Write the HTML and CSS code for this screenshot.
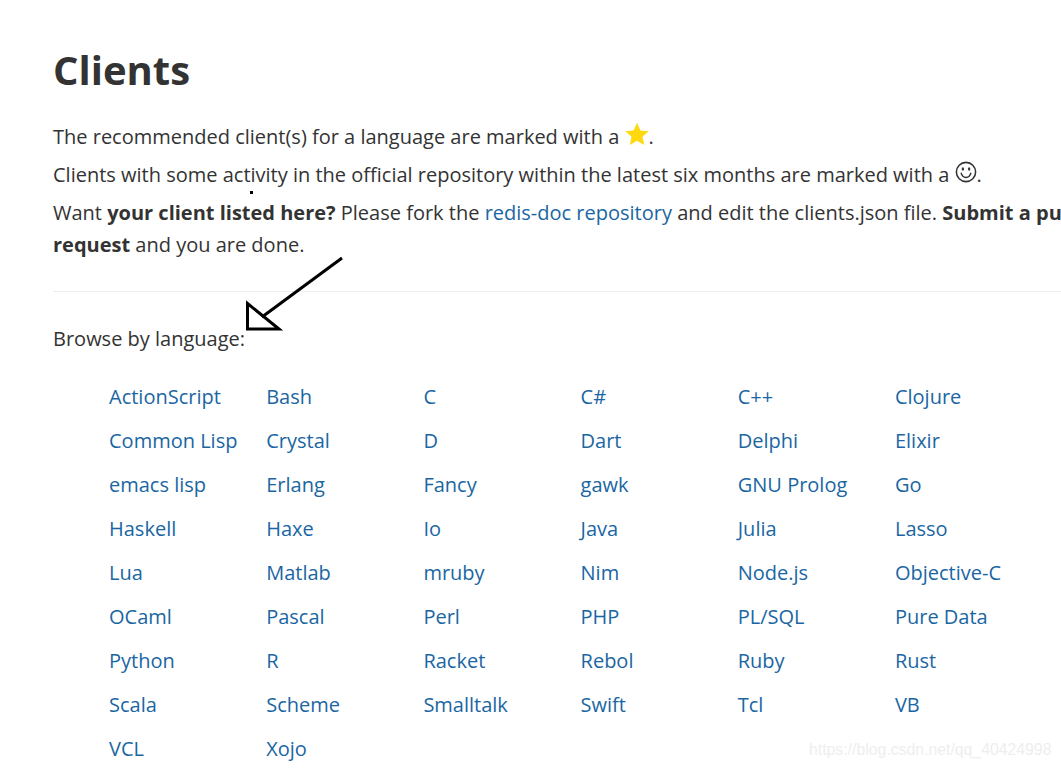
FILE: index.html
```html
<!DOCTYPE html>
<html lang="en">
<head>
<meta charset="utf-8">
<title>Clients</title>
<link rel="stylesheet" href="styles.css">
</head>
<body>
<main class="page">
  <h1 class="title">Clients</h1>
  <p class="line">The recommended client(s) for a language are marked with a <svg class="star" viewBox="0 0 24 24" width="24" height="24"><path d="M12 .8l3.4 7.6 8.2.9-6.1 5.5 1.700 8.100L12 18.800l-7.200 4.100 1.700-8.100L.4 9.300l8.200-.9z" fill="#ffd90f"/></svg>.</p>
  <p class="line">Clients with some activity in the official repository within the latest six months are marked with a <svg class="smile" viewBox="0 0 24 24" width="22" height="22"><g fill="none" stroke="#333" stroke-width="1.700"><circle cx="12" cy="12" r="10.500"/><path d="M6.800 13.500c1 3 3 4.400 5.200 4.400s4.200-1.400 5.200-4.400" stroke-linecap="round"/></g><ellipse cx="8.600" cy="8.800" rx="1.300" ry="1.900" fill="#333"/><ellipse cx="15.400" cy="8.800" rx="1.300" ry="1.900" fill="#333"/></svg>.</p>
  <p class="para">Want <strong>your client listed here?</strong> Please fork the <a href="#">redis-doc repository</a> and edit the clients.json file. <strong>Submit a pull request</strong> and you are done.</p>
  <hr class="rule">
  <p class="browse">Browse by language:</p>
  <ul class="langs">
    <li><a href="#">ActionScript</a></li><li><a href="#">Bash</a></li><li><a href="#">C</a></li><li><a href="#">C#</a></li><li><a href="#">C++</a></li><li><a href="#">Clojure</a></li>
    <li><a href="#">Common Lisp</a></li><li><a href="#">Crystal</a></li><li><a href="#">D</a></li><li><a href="#">Dart</a></li><li><a href="#">Delphi</a></li><li><a href="#">Elixir</a></li>
    <li><a href="#">emacs lisp</a></li><li><a href="#">Erlang</a></li><li><a href="#">Fancy</a></li><li><a href="#">gawk</a></li><li><a href="#">GNU Prolog</a></li><li><a href="#">Go</a></li>
    <li><a href="#">Haskell</a></li><li><a href="#">Haxe</a></li><li><a href="#">Io</a></li><li><a href="#">Java</a></li><li><a href="#">Julia</a></li><li><a href="#">Lasso</a></li>
    <li><a href="#">Lua</a></li><li><a href="#">Matlab</a></li><li><a href="#">mruby</a></li><li><a href="#">Nim</a></li><li><a href="#">Node.js</a></li><li><a href="#">Objective-C</a></li>
    <li><a href="#">OCaml</a></li><li><a href="#">Pascal</a></li><li><a href="#">Perl</a></li><li><a href="#">PHP</a></li><li><a href="#">PL/SQL</a></li><li><a href="#">Pure Data</a></li>
    <li><a href="#">Python</a></li><li><a href="#">R</a></li><li><a href="#">Racket</a></li><li><a href="#">Rebol</a></li><li><a href="#">Ruby</a></li><li><a href="#">Rust</a></li>
    <li><a href="#">Scala</a></li><li><a href="#">Scheme</a></li><li><a href="#">Smalltalk</a></li><li><a href="#">Swift</a></li><li><a href="#">Tcl</a></li><li><a href="#">VB</a></li>
    <li><a href="#">VCL</a></li><li><a href="#">Xojo</a></li>
  </ul>
</main>
<svg class="arrow" viewBox="0 0 1061 768" width="1061" height="768">
  <path d="M342 258L262 317" fill="none" stroke="#000" stroke-width="3"/>
  <path d="M247.500 303.500V329H279L247.500 303.500Z" fill="none" stroke="#000" stroke-width="3"/>
  <rect x="250" y="191" width="3" height="3" fill="#000"/>
</svg>
<div class="watermark">https://blog.csdn.net/qq_40424998</div>
</body>
</html>
```
FILE: styles.css
```css
html, body {
  margin: 0;
  height: 100%;
  background: #fff;
  overflow: hidden;
}
body {
  position: relative;
  width: 1061px;
  height: 768px;
  font-family: "Open Sans", sans-serif;
  font-size: 20px;
  color: #333;
}
.page {
  width: 1040px;
  padding: 40px 0 0 53px;
}
.title {
  margin: 0 0 21px;
  font-size: 40px;
  line-height: 60px;
  font-weight: 700;
  color: #333;
}
.line {
  margin: 0 0 6px;
  line-height: 32px;
  white-space: nowrap;
}
.star {
  vertical-align: -2px;
}
.smile {
  vertical-align: -1px;
}
.para {
  margin: 0 0 30px;
  line-height: 32px;
}
a {
  color: #1a66a3;
  text-decoration: none;
}
.rule {
  margin: 0;
  border: 0;
  border-top: 1px solid #eee;
  width: 1008px;
}
.browse {
  margin: 31px 0 20px;
  line-height: 32px;
}
.langs {
  display: grid;
  grid-template-columns: repeat(6, 157.200px);
  grid-auto-rows: 44px;
  margin: 0;
  padding: 0 0 0 56px;
  list-style: none;
  line-height: 44px;
}
.arrow {
  position: absolute;
  left: 0;
  top: 0;
  pointer-events: none;
}
.watermark {
  position: absolute;
  left: 809px;
  top: 738px;
  font-family: "Liberation Sans", sans-serif;
  font-size: 15.800px;
  line-height: 24px;
  color: #eeeeee;
  white-space: nowrap;
}
```
